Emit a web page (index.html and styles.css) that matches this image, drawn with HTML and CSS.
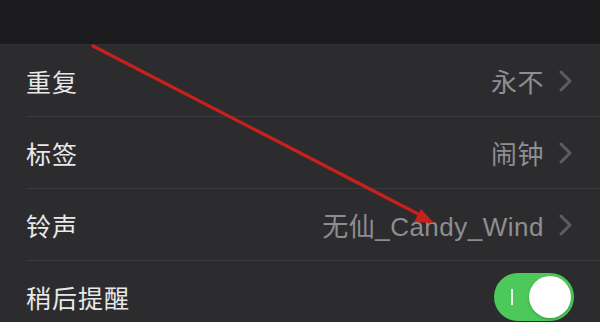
FILE: index.html
```html
<!DOCTYPE html>
<html lang="zh">
<head>
<meta charset="utf-8">
<link rel="stylesheet" href="styles.css">
</head>
<body>
<div class="screen">
  <div class="topbar"></div>
  <ul class="list">
    <li class="row">
      <span class="label">重复</span>
      <span class="value">永不</span>
      <svg class="chev" width="14" height="22" viewBox="0 0 14 22"><path d="M2 2 L11 11 L2 20" fill="none" stroke="#5c5c60" stroke-width="3" stroke-linecap="round" stroke-linejoin="round"/></svg>
    </li>
    <li class="row">
      <span class="label">标签</span>
      <span class="value">闹钟</span>
      <svg class="chev" width="14" height="22" viewBox="0 0 14 22"><path d="M2 2 L11 11 L2 20" fill="none" stroke="#5c5c60" stroke-width="3" stroke-linecap="round" stroke-linejoin="round"/></svg>
    </li>
    <li class="row">
      <span class="label">铃声</span>
      <span class="value">无仙_Candy_Wind</span>
      <svg class="chev" width="14" height="22" viewBox="0 0 14 22"><path d="M2 2 L11 11 L2 20" fill="none" stroke="#5c5c60" stroke-width="3" stroke-linecap="round" stroke-linejoin="round"/></svg>
    </li>
    <li class="row last">
      <span class="label">稍后提醒</span>
      <span class="toggle"><span class="on-mark"></span><span class="knob"></span></span>
    </li>
  </ul>
  <svg class="annot" width="600" height="322" viewBox="0 0 600 322">
    <line x1="93" y1="46" x2="424" y2="217" stroke="#c8201a" stroke-width="3.2" stroke-linecap="round"/>
    <polygon points="434,223 414,222 421,209" fill="#c8201a"/>
  </svg>
</div>
</body>
</html>
```
FILE: styles.css
```css
* { box-sizing: border-box; }
html, body { margin: 0; padding: 0; }
body {
  width: 600px;
  height: 322px;
  overflow: hidden;
  background: #2c2c2e;
  font-family: "Noto Sans CJK SC", "Noto Sans", sans-serif;
}
.screen {
  position: relative;
  width: 600px;
  height: 322px;
  overflow: hidden;
}
.topbar {
  height: 45px;
  background: #1c1c1e;
  border-bottom: 1px solid #323234;
}
.list {
  list-style: none;
  margin: 0;
  padding: 0 0 0 26px;
  background: #2c2c2e;
}
.row {
  display: flex;
  align-items: center;
  height: 72px;
  padding-right: 27px;
  border-bottom: 1px solid #3a3a3c;
}
.row.last { border-bottom: none; }
.label {
  flex: 1;
  color: #e8e8ea;
  font-size: 25px;
  letter-spacing: 1px;
}
.value {
  color: #8e8e92;
  font-family: "Liberation Sans", "Noto Sans CJK SC", sans-serif;
  font-size: 26px;
  letter-spacing: 0.5px;
  margin-right: 15px;
}
.chev { display: block; }
.toggle {
  position: relative;
  display: block;
  width: 80px;
  height: 48px;
  margin-right: -1px;
  border-radius: 24px;
  background: #4cc95a;
}
.on-mark {
  position: absolute;
  left: 17px;
  top: 16px;
  width: 2px;
  height: 16px;
  background: #e8f6ea;
}
.knob {
  position: absolute;
  right: 3px;
  top: 3px;
  width: 42px;
  height: 42px;
  border-radius: 50%;
  background: #ffffff;
  box-shadow: 0 1px 3px rgba(0,0,0,0.25);
}
.annot {
  position: absolute;
  left: 0;
  top: 0;
  pointer-events: none;
}
```
